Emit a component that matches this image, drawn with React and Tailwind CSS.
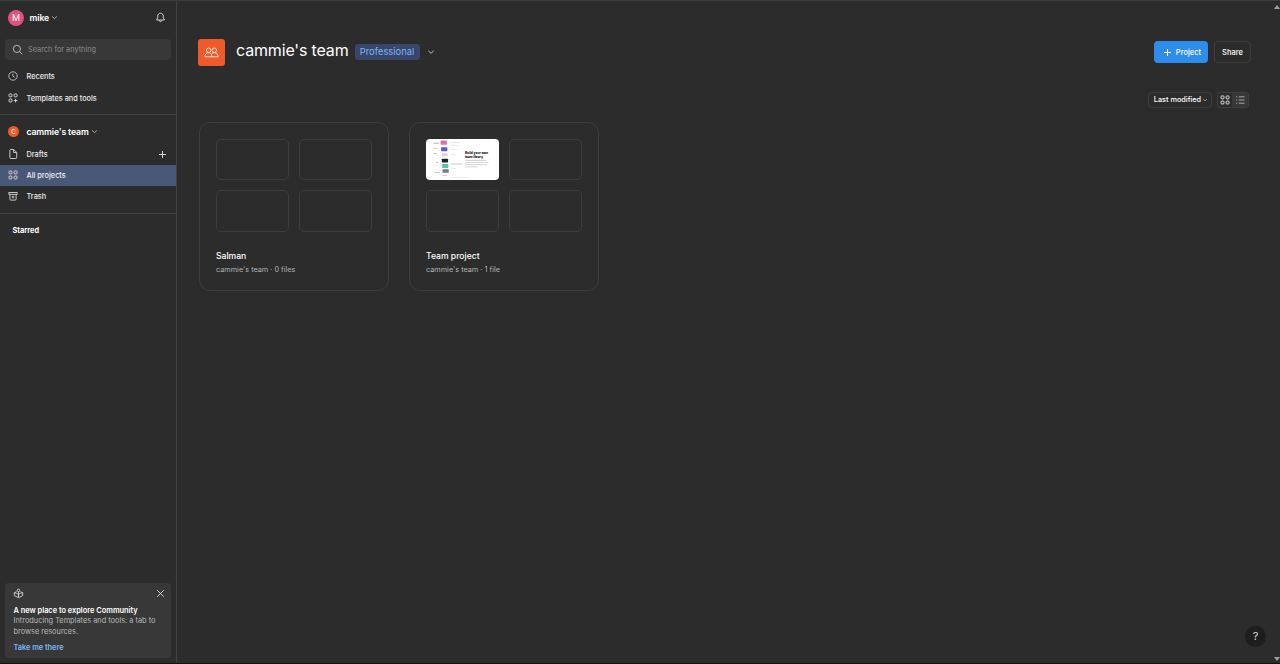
function Chevron({ className }) {
  return (
    <svg className={className} viewBox="0 0 8 8" fill="none" stroke="currentColor" strokeWidth="0.9">
      <path d="M1.3 2.8 4 5.3 6.7 2.8" />
    </svg>
  );
}

function Plus({ className }) {
  return (
    <svg className={className} viewBox="0 0 10 10" fill="none" stroke="currentColor" strokeWidth="1">
      <path d="M5.5 2v7M2 5.5h7" />
    </svg>
  );
}

function GridIcon({ className, last = true }) {
  return (
    <svg className={className} viewBox="0 0 12 12" fill="none" stroke="currentColor" strokeWidth="0.95">
      <rect x="2" y="1.9" width="3" height="3" rx="1" />
      <rect x="7.1" y="1.9" width="3" height="3" rx="1" />
      <rect x="2" y="7" width="3" height="3" rx="1" />
      {last ? <rect x="7.1" y="7" width="3" height="3" rx="1" /> : <path d="M8.6 6.8v3.6M6.8 8.6h3.6" />}
    </svg>
  );
}

function NavRow({ icon, label, active, action }) {
  return (
    <div className={`flex items-center pr-[9.5px] pl-[7px] text-white/90 ${active ? "h-[21px] bg-[#4a5878]" : "h-[21.5px]"}`}>
      <span className="flex w-[19.5px]">{icon}</span>
      <span className="flex-1 pt-[2px]">{label}</span>
      {action}
    </div>
  );
}

const iconSize = "size-[12px] text-[#d6d6d6]";

function Sidebar() {
  return (
    <aside className="flex w-[177px] shrink-0 flex-col border-r border-[#414141] text-[7.33px] leading-[10px] font-medium">
      <div className="flex h-[38px] items-center pr-[10.5px] pb-[5px] pl-[8px]">
        <span className="flex size-[16px] items-center justify-center rounded-full bg-[#e2507f] text-[9px] font-normal text-white">M</span>
        <span className="ml-[5.5px] text-[8.7px] font-semibold tracking-[-0.01em] text-white">mike</span>
        <Chevron className="ml-[2px] size-[7px] text-[#cccccc]" />
        <svg className="ml-auto size-[11px] text-[#e0e0e0]" viewBox="0 0 11 11" fill="none" stroke="currentColor" strokeWidth="0.9">
          <path d="M5.5 1.2C3.7 1.2 2.7 2.6 2.7 4v1.7L1.6 8h7.8L8.3 5.7V4c0-1.4-1-2.8-2.8-2.8ZM4.3 8.3c.1 1 .5 1.4 1.2 1.4s1.1-.4 1.2-1.4" />
        </svg>
      </div>
      <div className="mx-[5px] flex h-[21px] items-center rounded-[4px] bg-[#383838] pl-[7px] font-normal text-[#8c8c8c]">
        <svg className="size-[11px] text-[#c4c4c4]" viewBox="0 0 11 11" fill="none" stroke="currentColor" strokeWidth="0.9">
          <circle cx="4.9" cy="4.9" r="3.6" />
          <path d="m7.6 7.6 2.6 2.6" />
        </svg>
        <span className="ml-[5px]">Search for anything</span>
      </div>
      <div className="mt-[5.5px] pb-[5px]">
        <NavRow
          label="Recents"
          icon={
            <svg className={iconSize} viewBox="0 0 12 12" fill="none" stroke="currentColor" strokeWidth="0.8">
              <circle cx="6" cy="6" r="4.2" />
              <path d="M5.9 3.6v2.6l1.7 1" />
            </svg>
          }
        />
        <NavRow label="Templates and tools" icon={<GridIcon className={iconSize} last={false} />} />
      </div>
      <div className="border-t border-[#414141] pt-[6.5px] pb-[5.5px]">
        <div className="flex h-[22px] items-center pb-[1px] pl-[8px]">
          <span className="flex size-[11px] items-center justify-center rounded-full bg-[#ee5a2b] text-[6px] font-normal text-white">C</span>
          <span className="ml-[7.5px] text-[8.7px] font-semibold tracking-[-0.015em] text-white">cammie's team</span>
          <Chevron className="ml-[2.5px] size-[7px] text-[#cccccc]" />
        </div>
        <NavRow
          label="Drafts"
          icon={
            <svg className={iconSize} viewBox="0 0 12 12" fill="none" stroke="currentColor" strokeWidth="0.9">
              <path d="M2.9 2.4c0-.6.3-.9.9-.9h3l2.9 2.9v5.2c0 .6-.3.9-.9.9h-5c-.6 0-.9-.3-.9-.9ZM6.6 1.7v2.8h2.9" />
            </svg>
          }
          action={<Plus className="size-[10px] text-[#d6d6d6]" />}
        />
        <NavRow active label="All projects" icon={<GridIcon className={iconSize} />} />
        <NavRow
          label="Trash"
          icon={
            <svg className={iconSize} viewBox="0 0 12 12" fill="none" stroke="currentColor" strokeWidth="0.9">
              <path d="M1.8 2.5h8.4v1.9H1.8ZM2.9 4.5v4.7c0 .6.3.9.9.9h4.4c.6 0 .9-.3.9-.9V4.5" />
              <circle cx="6" cy="7" r="0.9" />
            </svg>
          }
        />
      </div>
      <div className="border-t border-[#414141] pt-[12px] pl-[12.5px] font-bold text-white">Starred</div>
      <div className="mx-[5px] mt-auto mb-[5px] h-[75px] rounded-[4px] bg-[#383838] pt-[5px] pr-[5.5px] pl-[8.5px] font-normal text-[#b8b8b8]">
        <div className="flex h-[11px] items-center justify-between text-[#dddddd]">
          <svg className="-ml-[1px] size-[11px]" viewBox="0 0 12 12" fill="none" stroke="currentColor" strokeWidth="0.9">
            <circle cx="6" cy="2.6" r="1.4" />
            <path d="M6 4v6.4M3.9 4 1.4 5.2v3.1L6 10.5l4.6-2.2V5.2L8.1 4M1.5 5.3C3 5.3 5.4 6 6 7.4c.6-1.4 3-2.1 4.5-2.1" />
          </svg>
          <svg className="size-[11px]" viewBox="0 0 11 11" fill="none" stroke="currentColor" strokeWidth="0.9">
            <path d="m2.2 2.2 6.6 6.6M8.8 2.2 2.2 8.8" />
          </svg>
        </div>
        <p className="mt-[6.5px] text-[7.4px] font-semibold whitespace-nowrap text-white">A new place to explore Community</p>
        <p className="mt-[0.5px] text-[7.38px] leading-[10.5px] whitespace-nowrap">Introducing Templates and tools: a tab to<br />browse resources.</p>
        <p className="mt-[5.5px] font-semibold text-[#79b8f5]">Take me there</p>
      </div>
    </aside>
  );
}

function LibraryThumb() {
  return (
    <div className="flex h-[41px] w-[73px] overflow-hidden rounded-[4px] bg-white">
      <svg className="h-full w-full" viewBox="0 0 72.5 40.5">
        <rect x="14.5" y="1.5" width="6.2" height="4" rx="0.6" fill="#df6fae" />
        <rect x="15" y="8" width="6.2" height="4" rx="0.6" fill="#5a57da" />
        <rect x="15.5" y="14" width="6" height="3" rx="0.6" fill="#d8d8de" />
        <rect x="15.7" y="19.4" width="6.2" height="3.8" rx="0.6" fill="#20222a" />
        <rect x="16" y="24.6" width="6.2" height="4" rx="0.6" fill="#53c79c" />
        <rect x="16.4" y="30" width="6.2" height="3.4" rx="0.6" fill="#777a82" />
        <g fill="#aaaaaa">
          <rect x="7.5" y="3.6" width="5.3" height="0.9" />
          <rect x="8" y="8.7" width="2.4" height="0.8" />
          <rect x="8" y="14" width="2.4" height="0.8" />
          <rect x="10" y="23" width="2" height="0.8" />
          <rect x="8.4" y="33" width="5.5" height="0.6" />
          <rect x="17" y="36" width="4" height="0.6" />
        </g>
        <g fill="#dcdce1">
          <rect x="24" y="3" width="10" height="0.7" />
          <rect x="25" y="6" width="8" height="0.5" />
          <rect x="25" y="10" width="4" height="0.7" />
          <rect x="25" y="15" width="5" height="0.6" />
          <rect x="25" y="24" width="11" height="1.6" />
          <rect x="25" y="29" width="5" height="0.5" />
          <rect x="25" y="38" width="17" height="0.5" />
        </g>
        <g fill="#b9b9bd">
          <rect x="39" y="21" width="21" height="0.6" />
          <rect x="39" y="23.1" width="23" height="0.6" />
          <rect x="39" y="25.2" width="22" height="0.6" />
          <rect x="39" y="27.3" width="12" height="0.6" />
        </g>
        <g fill="#111111" fontFamily="Inter, sans-serif" fontSize="3.6" fontWeight="800">
          <text x="38.7" y="15" textLength="23" lengthAdjust="spacingAndGlyphs">Build your own</text>
          <text x="38.7" y="18.8" textLength="18" lengthAdjust="spacingAndGlyphs">team library</text>
        </g>
      </svg>
    </div>
  );
}

function EmptyThumb() {
  return <div className="rounded-[5px] border border-[#3d3d3d]" />;
}

function ProjectCard({ title, meta, thumb }) {
  return (
    <div className="h-[169px] w-[190px] rounded-[11px] border border-[#3d3d3d] px-[16px] pt-[16px]">
      <div className="grid grid-cols-[73px_73px] grid-rows-[41px_42px] gap-[10px]">
        {thumb ?? <EmptyThumb />}
        <EmptyThumb />
        <EmptyThumb />
        <EmptyThumb />
      </div>
      <p className="mt-[18px] text-[8.6px] leading-[13px] font-medium text-white">{title}</p>
      <p className="mt-[2px] text-[7.3px] leading-[10px] text-[#b3b3b3]">{meta}</p>
    </div>
  );
}

export default function App() {
  return (
    <div className="relative flex h-[664px] w-[1280px] overflow-hidden border-t border-b border-t-[#3b3e41] border-b-[#111111] bg-[#2c2c2c] font-['Inter',sans-serif] text-white">
      <Sidebar />
      <main className="min-w-0 flex-1 pt-[37px] pr-[29px] pl-[21px]">
        <header className="flex h-[28px] items-center">
          <span className="flex size-[27px] items-center justify-center rounded-[3px] bg-[#ee5a2b]">
            <svg className="h-[11px] w-[15px]" viewBox="0 0 15 11" fill="none" stroke="#ffe1d5" strokeWidth="1">
              <circle cx="4.7" cy="3.2" r="2.2" />
              <circle cx="10.3" cy="3.2" r="2.2" />
              <path d="M.8 9.8c0-2.5 1.5-4.1 3.9-4.1 1.3 0 2.3.5 2.8 1.4.5-.9 1.5-1.4 2.8-1.4 2.4 0 3.9 1.6 3.9 4.1H.8ZM7.5 7.1v2.7" />
            </svg>
          </span>
          <h1 className="ml-[11px] w-[113px] pb-[4px] text-[16px] leading-[22px] font-normal tracking-[-0.01em] whitespace-nowrap">cammie's team</h1>
          <span className="ml-[6px] flex h-[16px] w-[65px] items-center justify-center rounded-[3px] bg-[#394569] pr-[1px] text-[9.4px] text-[#78b8f4]">Professional</span>
          <Chevron className="ml-[6.5px] size-[8px] text-[#cccccc]" />
          <button className="ml-auto flex h-[21.5px] w-[54px] items-center justify-center gap-[4px] rounded-[4px] bg-[#2e8ceb] pt-[1px] pl-[1px] text-[7.5px] font-medium">
            <Plus className="-mt-[2px] size-[10px]" />
            Project
          </button>
          <button className="ml-[6px] h-[21.5px] w-[37px] rounded-[4px] border border-[#3d3d3d] pt-[1px] text-[7.5px] font-medium">Share</button>
        </header>
        <div className="mt-[25px] flex h-[17px] items-center justify-end">
          <div className="flex h-[16px] w-[64px] items-center justify-center gap-[1px] rounded-[4px] border border-[#3d3d3d] pt-[1px] pl-[2px] text-[7.3px] font-medium whitespace-nowrap">
            Last modified
            <Chevron className="size-[6px] text-[#bbbbbb]" />
          </div>
          <div className="mr-[2px] ml-[5px] flex h-[16px] w-[32px] overflow-hidden rounded-[3px] border border-[#3d3d3d]">
            <span className="flex w-[14px] items-center justify-center">
              <GridIcon className="size-[12px] shrink-0 text-[#e6e6e6]" />
            </span>
            <span className="flex flex-1 items-center justify-center bg-[#383838] pl-[1px]">
              <svg className="h-[8px] w-[9px]" viewBox="0 0 9 8" fill="none" stroke="#b5b5b5" strokeWidth="0.9">
                <path d="M0.2 .8h1M0.2 4h1M0.2 7.2h1M2.8.8H8.5M2.8 4H8.5M2.8 7.2H8.5" />
              </svg>
            </span>
          </div>
        </div>
        <div className="mt-[14px] ml-[1px] flex gap-[20px]">
          <ProjectCard title="Salman" meta="cammie's team · 0 files" />
          <ProjectCard title="Team project" meta="cammie's team · 1 file" thumb={<LibraryThumb />} />
        </div>
      </main>
      <button className="absolute right-[14px] bottom-[16px] flex size-[21px] items-center justify-center rounded-full bg-[#1e1e1e] text-[11px] text-[#dddddd]">?</button>
      <svg className="absolute top-[4px] right-0 h-[4px] w-[6px]" viewBox="0 0 6 4" fill="#a0a0a0">
        <path d="M0 4 3 0l3 4Z" />
      </svg>
      <svg className="absolute right-0 bottom-[2px] h-[4px] w-[6px]" viewBox="0 0 6 4" fill="#a0a0a0">
        <path d="M0 0 3 4l3-4Z" />
      </svg>
    </div>
  );
}
